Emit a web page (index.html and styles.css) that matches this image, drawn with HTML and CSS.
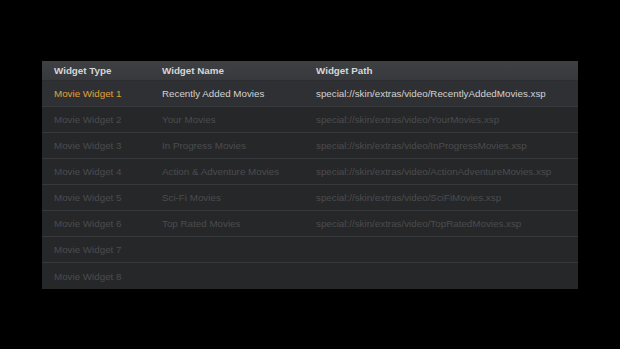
FILE: index.html
```html
<!DOCTYPE html>
<html lang="en">
<head>
    <meta charset="UTF-8">
    <title>Widgets</title>
    <link rel="stylesheet" href="styles.css">
</head>
<body>
    <div class="panel">
        <div class="row header">
            <span class="col type">Widget Type</span>
            <span class="col name">Widget Name</span>
            <span class="col path">Widget Path</span>
        </div>
        <div class="row active">
            <span class="col type">Movie Widget 1</span>
            <span class="col name">Recently Added Movies</span>
            <span class="col path">special://skin/extras/video/RecentlyAddedMovies.xsp</span>
        </div>
        <div class="row">
            <span class="col type">Movie Widget 2</span>
            <span class="col name">Your Movies</span>
            <span class="col path">special://skin/extras/video/YourMovies.xsp</span>
        </div>
        <div class="row">
            <span class="col type">Movie Widget 3</span>
            <span class="col name">In Progress Movies</span>
            <span class="col path">special://skin/extras/video/InProgressMovies.xsp</span>
        </div>
        <div class="row">
            <span class="col type">Movie Widget 4</span>
            <span class="col name">Action &amp; Adventure Movies</span>
            <span class="col path">special://skin/extras/video/ActionAdventureMovies.xsp</span>
        </div>
        <div class="row">
            <span class="col type">Movie Widget 5</span>
            <span class="col name">Sci-Fi Movies</span>
            <span class="col path">special://skin/extras/video/SciFiMovies.xsp</span>
        </div>
        <div class="row">
            <span class="col type">Movie Widget 6</span>
            <span class="col name">Top Rated Movies</span>
            <span class="col path">special://skin/extras/video/TopRatedMovies.xsp</span>
        </div>
        <div class="row">
            <span class="col type">Movie Widget 7</span>
            <span class="col name"></span>
            <span class="col path"></span>
        </div>
        <div class="row last">
            <span class="col type">Movie Widget 8</span>
            <span class="col name"></span>
            <span class="col path"></span>
        </div>
    </div>
</body>
</html>
```

FILE: styles.css
```css
body {
    margin: 0;
    background-color: #000;
    font-family: "Liberation Sans", Arial, sans-serif;
    font-size: 9.8px;
}
.panel {
    width: 536px;
    margin: 61px 0 0 42px;
    background-color: #262729;
}
.row {
    display: flex;
    align-items: center;
    height: 25px;
    border-bottom: 1px solid #37383b;
    color: #4b4c4f;
}
.row.last {
    border-bottom: none;
    height: 26px;
}
.row.header {
    height: 19px;
    background: linear-gradient(#3e4044, #37393d);
    color: #d6d6d6;
    font-weight: bold;
    border-bottom: 1px solid #2c2d30;
}
.row.active {
    background-color: #2f3034;
    color: #d2d2d2;
}
.row.active .type {
    color: #e0a03a;
}
.col {
    white-space: nowrap;
}
.type {
    width: 108px;
    padding-left: 12px;
}
.name {
    width: 154px;
}
.path {
    flex: 1;
}
```
